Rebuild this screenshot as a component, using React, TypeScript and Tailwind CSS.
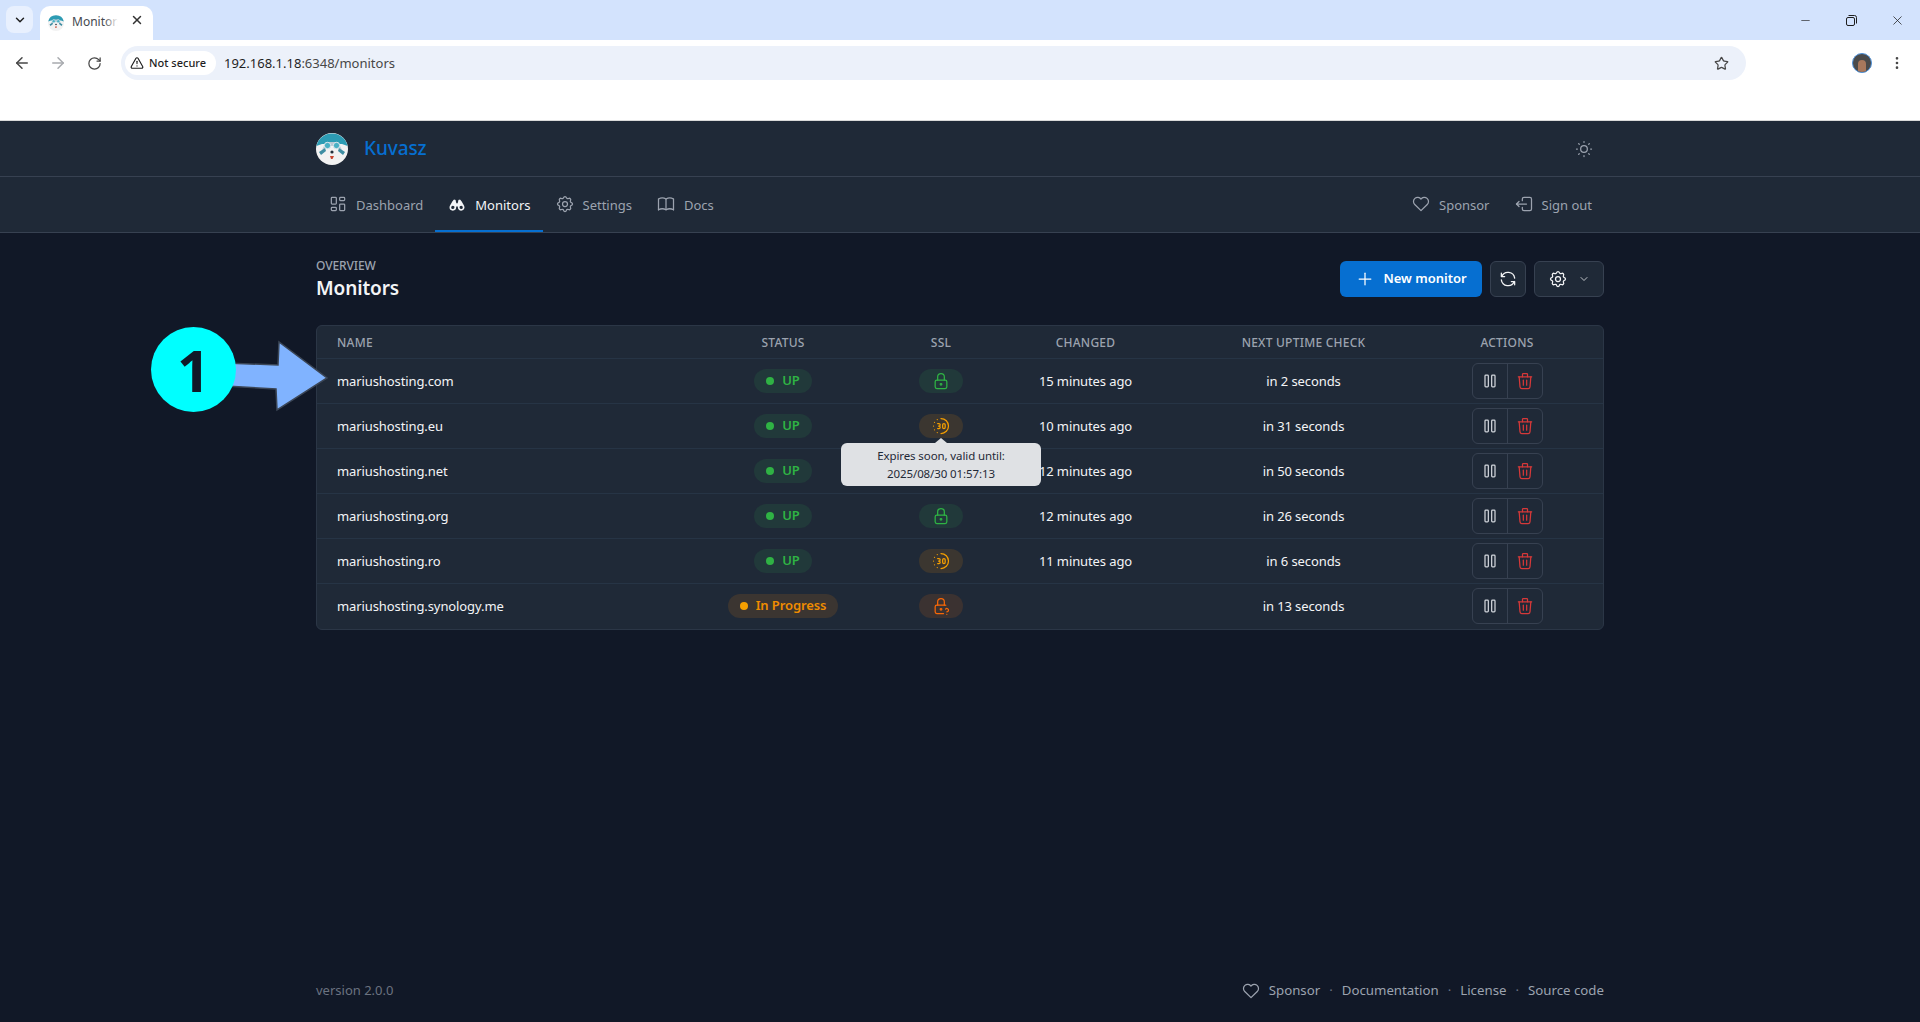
import React from 'react'
import { ArrowLeft, ArrowRight, RotateCw, Star, TriangleAlert, EllipsisVertical, ChevronDown, X, Minus } from 'lucide-react'
import {
  TbLayoutDashboard, TbBinocularsFilled, TbSettings, TbBook, TbHeart, TbLogout2, TbSun, TbPlus, TbRefresh,
  TbChevronDown, TbPlayerPause, TbTrash, TbLock, TbLockQuestion, TbTimeDuration30,
} from 'react-icons/tb'

type Ssl = 'ok' | 'soon' | 'unknown'

const rows: { name: string; inProgress?: boolean; ssl: Ssl; changed: string; next: string }[] = [
  { name: 'mariushosting.com', ssl: 'ok', changed: '15 minutes ago', next: 'in 2 seconds' },
  { name: 'mariushosting.eu', ssl: 'soon', changed: '10 minutes ago', next: 'in 31 seconds' },
  { name: 'mariushosting.net', ssl: 'ok', changed: '12 minutes ago', next: 'in 50 seconds' },
  { name: 'mariushosting.org', ssl: 'ok', changed: '12 minutes ago', next: 'in 26 seconds' },
  { name: 'mariushosting.ro', ssl: 'soon', changed: '11 minutes ago', next: 'in 6 seconds' },
  { name: 'mariushosting.synology.me', inProgress: true, ssl: 'unknown', changed: '', next: 'in 13 seconds' },
]

const Logo = ({ size }: { size: number }) => (
  <svg width={size} height={size} viewBox="0 0 32 32">
    <circle cx="16" cy="16" r="16" fill="#f2f2f2" />
    <path d="M0.4 13A16 16 0 0 1 31.6 13L26 11H6Z" fill="#2d9cb4" />
    <path d="M6 17L10 9H22L26 17L20 13H12Z" fill="#b9c7d3" />
    <circle cx="11.5" cy="12.5" r="3.2" fill="#49b0c4" stroke="#dfe8ee" />
    <circle cx="20.5" cy="12.5" r="3.2" fill="#49b0c4" stroke="#dfe8ee" />
    <path d="M3 19L9 15L10 18L5 22Z M29 19L23 15L22 18L27 22Z" fill="#3f8ea3" />
    <circle cx="16" cy="19" r="1.6" fill="#23303c" />
    <path d="M14 23H18L16.5 26H15Z" fill="#c8452f" />
  </svg>
)

const NavItem = ({ icon, label, active }: { icon: React.ReactNode; label: string; active?: boolean }) => (
  <div className={`flex items-center gap-2 h-full px-3 -mb-px border-b-2 tracking-normal ${active ? 'border-[#066fd1] text-[#f3f4f6]' : 'border-transparent text-[#9ca3af]'}`}>
    {icon}
    <span className="pt-[4px]">{label}</span>
  </div>
)

const SslBadge = ({ ssl }: { ssl: Ssl }) => {
  if (ssl === 'ok') {
    return (
      <span className="flex items-center justify-center w-11 h-6 rounded-full bg-[#21393a] text-[#2fb344]">
        <TbLock size={20} strokeWidth={1.5} />
      </span>
    )
  }
  if (ssl === 'soon') {
    return (
      <span className="flex items-center justify-center w-11 h-6 rounded-full bg-[#3b3630] text-[#f59f00]">
        <TbTimeDuration30 size={20} strokeWidth={1.5} />
      </span>
    )
  }
  return (
    <span className="flex items-center justify-center w-11 h-6 rounded-full bg-[#3b3231] text-[#f76707]">
      <TbLockQuestion size={20} strokeWidth={1.5} />
    </span>
  )
}

const Chrome = () => (
  <div className="h-[121px] bg-white border-b border-[#d9d9d9] text-[#1f1f1f] tracking-normal">
    <div className="h-10 bg-[#d3e3fd] flex items-end pl-[6px]">
      <div className="self-start mt-1.5 w-[27px] h-[27px] rounded-lg bg-[#e8f0fe] flex items-center justify-center">
        <ChevronDown size={14} strokeWidth={2.5} />
      </div>
      <div className="relative ml-[7px] w-[113px] h-[34px] bg-white rounded-t-[10px] flex items-center pl-[8px] text-xs text-[#45494f]">
        <Logo size={16} />
        <span className="ml-[8px] -mt-[2px] whitespace-nowrap">Monitors</span>
        <span className="absolute left-[64px] top-0 w-[24px] h-full bg-gradient-to-r from-transparent to-white to-60%" />
        <X size={14} strokeWidth={2.5} className="absolute left-[90px] top-[7px] text-[#333]" />
      </div>
      <div className="ml-auto flex h-full items-start">
        <div className="w-[46px] h-10 flex items-center justify-center"><Minus size={13} strokeWidth={1.2} /></div>
        <div className="w-[46px] h-10 flex items-center justify-center">
          <svg width="11" height="11" viewBox="0 0 11 11" fill="none" stroke="#1f1f1f" strokeWidth="1">
            <rect x="0.5" y="2.5" width="8" height="8" rx="1.5" />
            <path d="M2.5 0.5H8.5A2 2 0 0 1 10.5 2.5V8.5" />
          </svg>
        </div>
        <div className="w-[46px] h-10 flex items-center justify-center"><X size={15} strokeWidth={1.2} /></div>
      </div>
    </div>
    <div className="h-10 flex items-center pl-[13px] pr-[12px] pt-[6px]">
      <ArrowLeft size={18} className="text-[#474747]" />
      <ArrowRight size={18} className="ml-[18px] text-[#a8abaf]" />
      <RotateCw size={15} className="ml-[20px] text-[#474747]" />
      <div className="ml-[19px] w-[1625px] h-[34px] rounded-full bg-[#ecf1fa] flex items-center pl-1 pr-4">
        <div className="h-6 w-[91px] rounded-full bg-white flex items-center pl-[5px] gap-[5px] text-[11px] font-medium text-[#1f1f1f]">
          <TriangleAlert size={14} className="shrink-0" />
          <span className="whitespace-nowrap">Not secure</span>
        </div>
        <span className="ml-[8px] pt-[1px] text-[13px] text-[#1f1f1f]">192.168.1.18<span className="text-[#474747]">:6348/monitors</span></span>
        <Star size={15} className="ml-auto mr-[1px] text-[#474747]" strokeWidth={2} />
      </div>
      <div className="ml-[106px] w-5 h-5 rounded-full bg-[#4a4a4a] border border-[#4d90d8] overflow-hidden flex items-end justify-center">
        <div className="w-2 h-3 rounded-t-full bg-[#a8785c]" />
      </div>
      <EllipsisVertical size={16} className="ml-[17px] text-[#474747]" />
    </div>
  </div>
)

export default function App() {
  return (
    <div className="relative h-[1022px] overflow-hidden flex flex-col bg-[#111827] text-[13px] tracking-[-0.1px] text-[#f3f4f6] font-['Noto_Sans','Liberation_Sans',sans-serif]">
      <Chrome />

      <header className="bg-[#1f2937]">
        <div className="h-14 border-b border-[#374151]">
          <div className="w-[1288px] mx-auto h-full flex items-center">
            <Logo size={32} />
            <span className="ml-4 text-[19px] font-medium text-[#066fd1]">Kuvasz</span>
            <TbSun size={20} strokeWidth={1.5} className="ml-auto mr-[10px] text-[#9ca3af]" />
          </div>
        </div>
        <div className="h-14 border-b border-[#374151]">
          <div className="w-[1288px] mx-auto h-full flex items-stretch">
            <NavItem icon={<TbLayoutDashboard size={20} strokeWidth={1.5} />} label="Dashboard" />
            <NavItem active icon={<TbBinocularsFilled size={20} />} label="Monitors" />
            <NavItem icon={<TbSettings size={20} strokeWidth={1.5} />} label="Settings" />
            <NavItem icon={<TbBook size={20} strokeWidth={1.5} />} label="Docs" />
            <div className="ml-auto flex items-stretch">
              <NavItem icon={<TbHeart size={20} strokeWidth={1.5} />} label="Sponsor" />
              <NavItem icon={<TbLogout2 size={20} strokeWidth={1.5} />} label="Sign out" />
            </div>
          </div>
        </div>
      </header>

      <main className="w-[1288px] mx-auto">
        <div className="flex items-center justify-between mt-7 h-9">
          <div className="pt-[2px]">
            <div className="text-xs font-medium uppercase leading-4 text-[#9ca3af]">Overview</div>
            <div className="text-[19px] font-semibold leading-7 text-[#f3f4f6]">Monitors</div>
          </div>
          <div className="flex items-stretch h-9 gap-2 tracking-normal">
            <button className="w-[142px] rounded-md bg-[#066fd1] flex items-center justify-center gap-2 font-semibold text-white">
              <TbPlus size={20} strokeWidth={1.5} />
              New monitor
            </button>
            <button className="w-9 rounded-md border border-[#374151] bg-[#1f2937] flex items-center justify-center text-[#f3f4f6]">
              <TbRefresh size={20} strokeWidth={1.5} />
            </button>
            <button className="w-[70px] rounded-md border border-[#374151] bg-[#1f2937] flex items-center justify-center gap-[10px] text-[#f3f4f6]">
              <TbSettings size={20} strokeWidth={1.5} />
              <TbChevronDown size={12} strokeWidth={1.5} />
            </button>
          </div>
        </div>

        <div className="relative mt-7 rounded-md border border-[#2b3646] bg-[#1f2937] pb-px">
          <div className="h-[32px] pr-[42px] pt-[2px] grid grid-cols-[383px_166px_150px_139px_297px_110px] items-center text-xs font-medium uppercase text-[#9ca3af] text-center tracking-[0.02em]">
            <div className="pl-[20px] text-left">Name</div>
            <div>Status</div>
            <div>SSL</div>
            <div>Changed</div>
            <div>Next uptime check</div>
            <div>Actions</div>
          </div>
          {rows.map(row => (
            <div key={row.name} className="h-[45px] pr-[42px] grid grid-cols-[383px_166px_150px_139px_297px_110px] items-center text-center border-t border-[#263445]">
              <div className="pl-[20px] pt-px text-left">{row.name}</div>
              <div className="flex justify-center">
                {row.inProgress ? (
                  <span className="flex items-center gap-2 h-6 px-3 rounded-full bg-[#3b3531] font-semibold text-[#f08c00]">
                    <span className="w-2 h-2 rounded-full bg-[#f59f00]" />
                    In Progress
                  </span>
                ) : (
                  <span className="flex items-center gap-2 h-6 px-3 rounded-full bg-[#21393a] font-semibold text-[#2fb344]">
                    <span className="w-2 h-2 rounded-full bg-[#2fb344]" />
                    UP
                  </span>
                )}
              </div>
              <div className="flex justify-center"><SslBadge ssl={row.ssl} /></div>
              <div className="pt-px">{row.changed}</div>
              <div className="pt-px">{row.next}</div>
              <div className="flex justify-center">
                <div className="flex h-9 w-[71px] rounded-md border border-[#374151]">
                  <div className="flex-1 flex items-center justify-center border-r border-[#374151] text-[#d1d5db]">
                    <TbPlayerPause size={20} strokeWidth={1.5} />
                  </div>
                  <div className="flex-1 flex items-center justify-center text-[#d63939]">
                    <TbTrash size={20} strokeWidth={1.5} />
                  </div>
                </div>
              </div>
            </div>
          ))}

          {/* tooltip from hovering the SSL badge of the second row */}
          <div className="absolute left-[524px] top-[117px] w-[200px] h-[43px] rounded-md bg-[#dfe1e4] text-[11.5px] leading-[18px] text-[#1f2937] flex flex-col items-center justify-center">
            <span className="absolute -top-[5px] left-[94px] w-0 h-0 border-x-[6px] border-x-transparent border-b-[5px] border-b-[#dfe1e4]" />
            <span>Expires soon, valid until:</span>
            <span>2025/08/30 01:57:13</span>
          </div>
        </div>
      </main>

      <footer className="mt-auto mb-[21px] w-[1288px] mx-auto flex items-center justify-between text-[13.25px] tracking-normal text-[#9ca3af]">
        <span className="text-[#6b7280] text-[13px]">version 2.0.0</span>
        <div className="flex items-center">
          <TbHeart size={20} strokeWidth={1.5} />
          <span className="ml-2">Sponsor</span>
          <span className="mx-[9px] text-[#6b7280]">·</span>
          <span>Documentation</span>
          <span className="mx-[9px] text-[#6b7280]">·</span>
          <span>License</span>
          <span className="mx-[9px] text-[#6b7280]">·</span>
          <span>Source code</span>
        </div>
      </footer>

      {/* annotation drawn over the screenshot */}
      <svg className="absolute left-[225px] top-[335px]" width="110" height="82" viewBox="225 335 110 82">
        <path d="M225 363L278 365L279 342L327 378L277 410L276 389L225 386Z" fill="#80b3ff" stroke="#3b4656" strokeWidth="1.5" />
      </svg>
      <div className="absolute left-[151px] top-[327px] w-[85px] h-[85px] rounded-full bg-[#00ffff] flex items-center justify-center text-[58px] font-bold leading-none tracking-normal text-[#111827]">
        1
      </div>
    </div>
  )
}
